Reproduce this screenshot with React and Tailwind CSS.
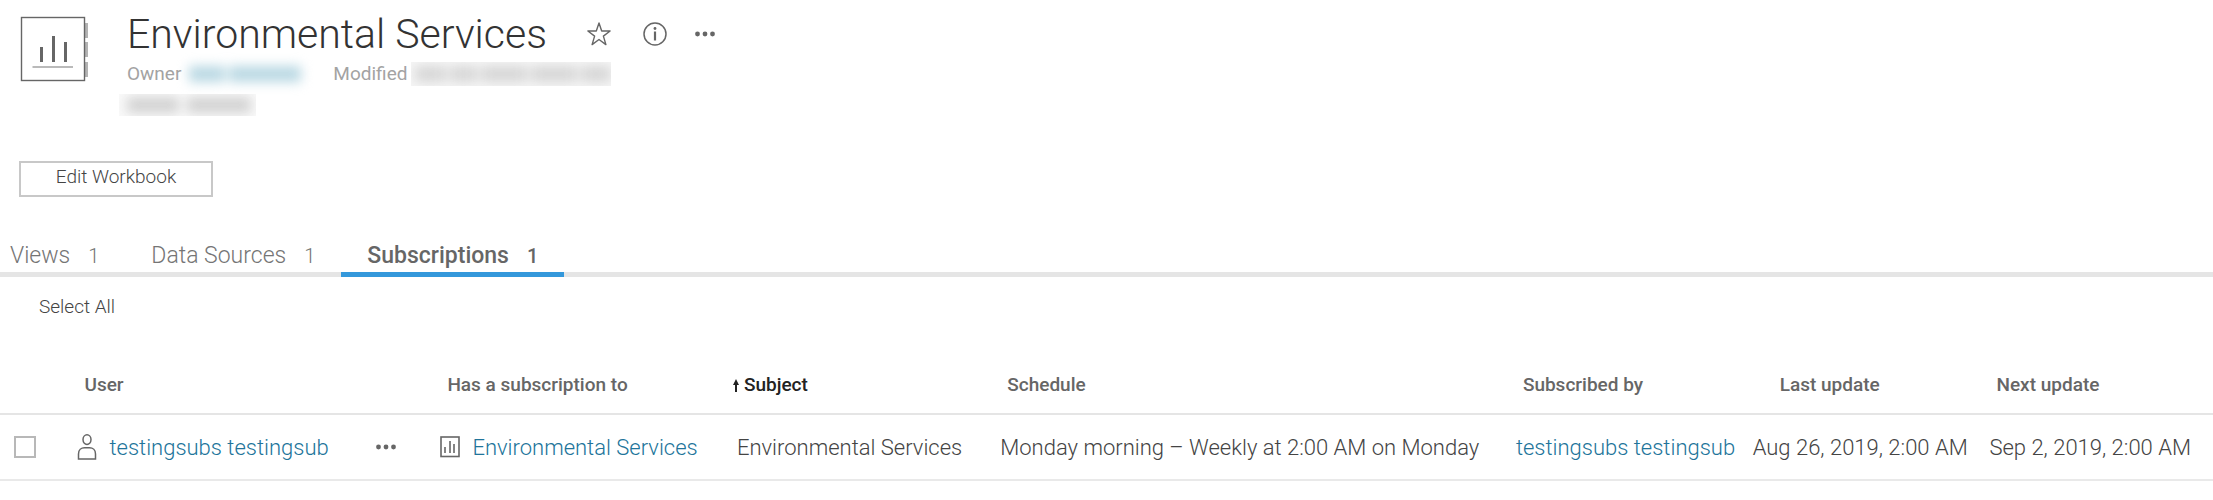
import { useState } from "react";

const tabs = [
  { id: "views", label: "Views", count: 1 },
  { id: "datasources", label: "Data Sources", count: 1 },
  { id: "subscriptions", label: "Subscriptions", count: 1 },
];

const subscriptions = [
  {
    id: 1,
    user: "testingsubs testingsub",
    workbook: "Environmental Services",
    subject: "Environmental Services",
    schedule: "Monday morning – Weekly at 2:00 AM on Monday",
    by: "testingsubs testingsub",
    last: "Aug 26, 2019, 2:00 AM",
    next: "Sep 2, 2019, 2:00 AM",
  },
];

const WorkbookLogo = () => (
  <svg className="h-[66px] w-[70px] shrink-0" viewBox="0 0 70 66" fill="none" aria-hidden="true">
    <path d="M65 7h3v15h-3zM65 26h3v15h-3zM65 46h3v15h-3z" fill="#b3b3b3" />
    <rect x="1.5" y="1.5" width="63" height="63" fill="#fff" stroke="#666" strokeWidth="1.4" />
    <path d="M20 31h3v15h-3zM32 20h3v26h-3zM44 26h3v20h-3z" fill="#666" />
    <path d="M12.500 51h40.500" stroke="#bababa" strokeWidth="2" />
  </svg>
);

const Dots = () => (
  <svg className="h-5 w-5" viewBox="0 0 20 20" fill="#666" aria-hidden="true">
    <circle cx="2.500" cy="10" r="2.400" />
    <circle cx="10" cy="10" r="2.400" />
    <circle cx="17.500" cy="10" r="2.400" />
  </svg>
);

const StarIcon = () => (
  <svg className="h-6 w-6" viewBox="0 0 24 24" fill="none" stroke="#666" strokeWidth="1.4" strokeLinejoin="round" aria-hidden="true">
    <path d="M12 1l2.700 8h8.400l-6.700 5.100 2.500 8.500-6.900-5.100-6.900 5.100 2.500-8.500L.9 9h8.400z" />
  </svg>
);

const InfoIcon = () => (
  <svg className="h-6 w-6" viewBox="0 0 24 24" fill="none" stroke="#666" strokeWidth="1.5" aria-hidden="true">
    <circle cx="12" cy="12" r="11" />
    <path d="M12 9.500v9" strokeWidth="2.200" />
    <circle cx="12" cy="6.500" r="1.400" fill="#666" stroke="none" />
  </svg>
);

const UserIcon = () => (
  <svg className="h-[26px] w-5 shrink-0" viewBox="0 0 20 26" fill="none" stroke="#666" strokeWidth="1.500" aria-hidden="true">
    <ellipse cx="10" cy="5.600" rx="4" ry="4.800" />
    <path d="M1.500 25v-5c0-4 2.800-6.200 6-6.200h5c3.200 0 6 2.200 6 6.200v5z" />
  </svg>
);

const WorkbookIcon = () => (
  <svg className="h-[22px] w-5 shrink-0" viewBox="0 0 20 22" fill="none" stroke="#666" aria-hidden="true">
    <rect x="1" y="1" width="18" height="19.500" strokeWidth="1.600" />
    <path d="M5 17v-6M10 17V5M14 17V8" strokeWidth="1.600" />
  </svg>
);

const App = () => {
  const [activa, setActiva] = useState("subscriptions");
  const [selected, setSelected] = useState([]);

  const toggle = (id) =>
    setSelected((prev) => (prev.includes(id) ? prev.filter((s) => s !== id) : [...prev, id]));

  const selectAll = () => setSelected(subscriptions.map((s) => s.id));

  return (
    <main className="bg-white font-['Roboto','Liberation_Sans',sans-serif] font-light text-[#444]">
      <header className="flex items-start gap-[37px] pt-4 pl-5">
        <WorkbookLogo />
        <div>
          <div className="flex h-9 items-center">
            <h1 className="text-[41px] leading-9 text-[#333]">Environmental Services</h1>
            <div className="ml-10 flex items-center gap-8">
              <button type="button" aria-label="Favorite"><StarIcon /></button>
              <button type="button" aria-label="Details"><InfoIcon /></button>
              <button type="button" aria-label="More actions" className="-ml-1"><Dots /></button>
            </div>
          </div>
          <div className="mt-1 flex h-9 items-center text-[19px] font-normal text-[#a3a3a3]">
            <span>Owner</span>
            <span className="ml-2 flex gap-1 blur-[6px]" aria-hidden="true">
              <span className="h-4 w-9 bg-[#b9d8e3]" />
              <span className="h-4 w-[72px] bg-[#b9d8e3]" />
            </span>
            <span className="ml-8">Modified</span>
            <span className="ml-1 overflow-hidden bg-[#f7f7f7]" aria-hidden="true">
              <span className="flex h-6 w-[200px] items-center gap-1 pl-1 blur-[6px]">
                <span className="h-4 w-8 bg-[#d6d6d6]" />
                <span className="h-4 w-7 bg-[#d6d6d6]" />
                <span className="h-4 w-12 bg-[#d6d6d6]" />
                <span className="h-4 w-12 bg-[#d6d6d6]" />
                <span className="h-4 w-8 bg-[#d6d6d6]" />
              </span>
            </span>
          </div>
          <div className="mt-[2px] -ml-2 w-[137px] overflow-hidden bg-[#fafafa]" aria-hidden="true">
            <div className="flex h-[22px] items-center gap-2 pl-2 blur-[6px]">
              <span className="h-4 w-[52px] bg-[#d2d2d2]" />
              <span className="h-4 w-[64px] bg-[#d2d2d2]" />
            </div>
          </div>
        </div>
      </header>

      <div className="mt-[45px] pl-[19px]">
        <button type="button" className="h-9 w-[194px] border-2 border-[#c8c8c8] pb-1 text-[19px] leading-7">
          Edit Workbook
        </button>
      </div>

      <nav className="mt-[35px] flex h-[45px] border-b-[5px] border-[#e5e5e5] text-[23px] text-[#757575]">
        {tabs.map((t) => (
          <button
            key={t.id}
            type="button"
            onClick={() => setActiva(t.id)}
            className={`-mb-[5px] flex items-center gap-[18px] border-b-[5px] first:pl-[10px] pt-2 pr-[26px] pl-[26px] ${
              activa === t.id ? "border-[#3498db] font-medium text-[#666]" : "border-transparent"
            }`}
          >
            <span>{t.label}</span>
            <span className="text-[20px]">{t.count}</span>
          </button>
        ))}
      </nav>

      <div className="flex h-[61px] items-center pl-[39px]">
        <button type="button" onClick={selectAll} className="text-[19px]">Select All</button>
      </div>

      <table className="w-full table-fixed border-collapse text-left text-[22px] whitespace-nowrap">
        <colgroup>
          <col className="w-[3.5%]" />
          <col className="w-[16.4%]" />
          <col className="w-[13.4%]" />
          <col className="w-[11.9%]" />
          <col className="w-[23.3%]" />
          <col className="w-[10.7%]" />
          <col className="w-[10.7%]" />
          <col className="w-[10.1%]" />
        </colgroup>
        <thead>
          <tr className="h-[76px] border-b-2 border-[#e5e5e5] text-[19px] text-[#666] [&>th]:p-0 [&>th]:pl-[7px] [&>th]:pt-5 [&>th]:font-medium">
            <th aria-label="Selected" />
            <th>User</th>
            <th>Has a subscription to</th>
            <th aria-sort="ascending" className="text-[#222]">
              <span className="-ml-3 flex items-center gap-1">
                <svg className="h-4 w-2" viewBox="0 0 8 16" aria-hidden="true">
                  <path d="M4 1L7 7H5v7H3V7H1z" fill="#222" />
                </svg>
                Subject
              </span>
            </th>
            <th>Schedule</th>
            <th>Subscribed by</th>
            <th><span className="pl-5">Last update</span></th>
            <th>Next update</th>
          </tr>
        </thead>
        <tbody>
          {subscriptions.map((s) => (
            <tr key={s.id} className="h-[66px] border-b-2 border-[#e9e9e9] [&>td]:p-0">
              <td>
                <input
                  type="checkbox"
                  aria-label={`Select ${s.user}`}
                  checked={selected.includes(s.id)}
                  onChange={() => toggle(s.id)}
                  className="ml-[14px] block h-[22px] w-[22px] appearance-none border-2 border-[#b8b8b8] checked:bg-[#3498db]"
                />
              </td>
              <td>
                <div className="flex items-center justify-between pr-11">
                  <div className="flex items-center gap-3">
                    <UserIcon />
                    <a href="#user" className="text-[#21749a]">{s.user}</a>
                  </div>
                  <button type="button" aria-label="More actions"><Dots /></button>
                </div>
              </td>
              <td>
                <div className="flex items-center gap-3">
                  <WorkbookIcon />
                  <a href="#workbook" className="text-[#21749a]">{s.workbook}</a>
                </div>
              </td>
              <td>{s.subject}</td>
              <td>{s.schedule}</td>
              <td><a href="#by" className="text-[#21749a]">{s.by}</a></td>
              <td>{s.last}</td>
              <td>{s.next}</td>
            </tr>
          ))}
        </tbody>
      </table>
    </main>
  );
};

export default App;
